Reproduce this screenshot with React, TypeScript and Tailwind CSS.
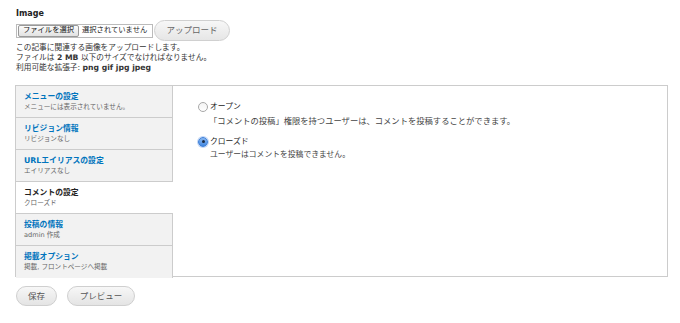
import React from "react";

type Tab = { title: string; summary: string; active?: boolean };

const tabs: Tab[] = [
  { title: "メニューの設定", summary: "メニューには表示されていません。" },
  { title: "リビジョン情報", summary: "リビジョンなし" },
  { title: "URLエイリアスの設定", summary: "エイリアスなし" },
  { title: "コメントの設定", summary: "クローズド", active: true },
  { title: "投稿の情報", summary: "admin 作成" },
  { title: "掲載オプション", summary: "掲載, フロントページへ掲載" },
];

const font = { fontFamily: "'DejaVu Sans', 'Noto Sans CJK JP', sans-serif" };

function Radio({ checked }: { checked?: boolean }) {
  if (checked) {
    return (
      <span className="flex h-[10px] w-[10px] items-center justify-center rounded-full border border-[#3d7fd9] bg-gradient-to-b from-[#8ab8f0] to-[#3f86e0] shadow-[0_0_0_1px_rgba(80,140,230,0.35)]">
        <span className="h-[3px] w-[3px] rounded-full bg-[#1a2a44]" />
      </span>
    );
  }
  return (
    <span className="h-[10px] w-[10px] rounded-full border border-[#a8a8a8] bg-gradient-to-b from-[#f4f4f4] to-[#ffffff]" />
  );
}

export default function App() {
  return (
    <div className="h-[323px] w-[680px] bg-white text-[#333]" style={font}>
      <div className="px-[16px] pt-[9px]">
        {/* file upload */}
        <div className="text-[8px] font-bold leading-[10px] text-[#222]">Image</div>
        <div className="mt-[1px] flex items-center">
          <div className="flex h-[14px] w-[137px] items-center border border-[#bbb] bg-white">
            <span className="ml-[1px] flex h-[12px] w-[61px] items-center justify-center rounded-[2px] border border-[#999] bg-gradient-to-b from-[#fbfbfb] to-[#e2e2e2] text-[7.3px] text-[#111]">
              ファイルを選択
            </span>
            <span className="ml-[3px] text-[7.3px] text-[#222]">選択されていません</span>
          </div>
          <button className="ml-[1px] h-[21px] w-[76px] rounded-full border border-[#d0d0d0] bg-gradient-to-b from-[#f7f7f7] to-[#e6e6e6] text-[8.5px] text-[#666]">
            アップロード
          </button>
        </div>
        <div className="mt-[2px] text-[7.7px] leading-[10px] text-[#333]">
          <div>この記事に関連する画像をアップロードします。</div>
          <div>
            ファイルは <span className="font-bold">2 MB</span> 以下のサイズでなければなりません。
          </div>
          <div>
            利用可能な拡張子: <span className="font-bold">png gif jpg jpeg</span>
          </div>
        </div>
      </div>

      {/* vertical tabs */}
      <div className="mx-[15px] mt-[12px] flex h-[192px] w-[653px] border border-[#ccc]">
        <ul className="w-[157px] shrink-0">
          {tabs.map((t, i) => (
            <li
              key={i}
              className={
                "h-[32px] border-b px-[8px] pt-[5px] " +
                (t.active
                  ? "border-[#ccc] bg-white"
                  : "border-[#ccc] border-r bg-[#f2f2f2]") +
                (i === tabs.length - 1 ? " border-b-0" : "")
              }
            >
              <div
                className={
                  "text-[7.8px] font-bold leading-[11px] " +
                  (t.active ? "text-[#222]" : "text-[#0074bd]")
                }
              >
                {t.title}
              </div>
              <div className="text-[6.6px] leading-[11px] text-[#666]">{t.summary}</div>
            </li>
          ))}
        </ul>
        <div className="flex-1 px-[25px] pt-[15px]">
          <div className="flex items-center gap-[2px]">
            <Radio />
            <span className="text-[7.8px] leading-[11px] text-[#222]">オープン</span>
          </div>
          <div className="ml-[11px] mt-[4px] text-[8.3px] leading-[11px] text-[#444]">
            「コメントの投稿」権限を持つユーザーは、コメントを投稿することができます。
          </div>
          <div className="mt-[9px] flex items-center gap-[2px]">
            <Radio checked />
            <span className="text-[7.8px] leading-[11px] text-[#222]">クローズド</span>
          </div>
          <div className="ml-[12px] mt-[2px] text-[7.8px] leading-[11px] text-[#444]">
            ユーザーはコメントを投稿できません。
          </div>
        </div>
      </div>

      {/* actions */}
      <div className="ml-[16px] mt-[9px] flex gap-[10px]">
        <button className="h-[20px] w-[41px] rounded-full border border-[#cfcfcf] bg-gradient-to-b from-[#f7f7f7] to-[#e4e4e4] text-[8.5px] text-[#555]">
          保存
        </button>
        <button className="h-[20px] w-[68px] rounded-full border border-[#cfcfcf] bg-gradient-to-b from-[#f7f7f7] to-[#e4e4e4] text-[8.5px] text-[#555]">
          プレビュー
        </button>
      </div>
    </div>
  );
}
